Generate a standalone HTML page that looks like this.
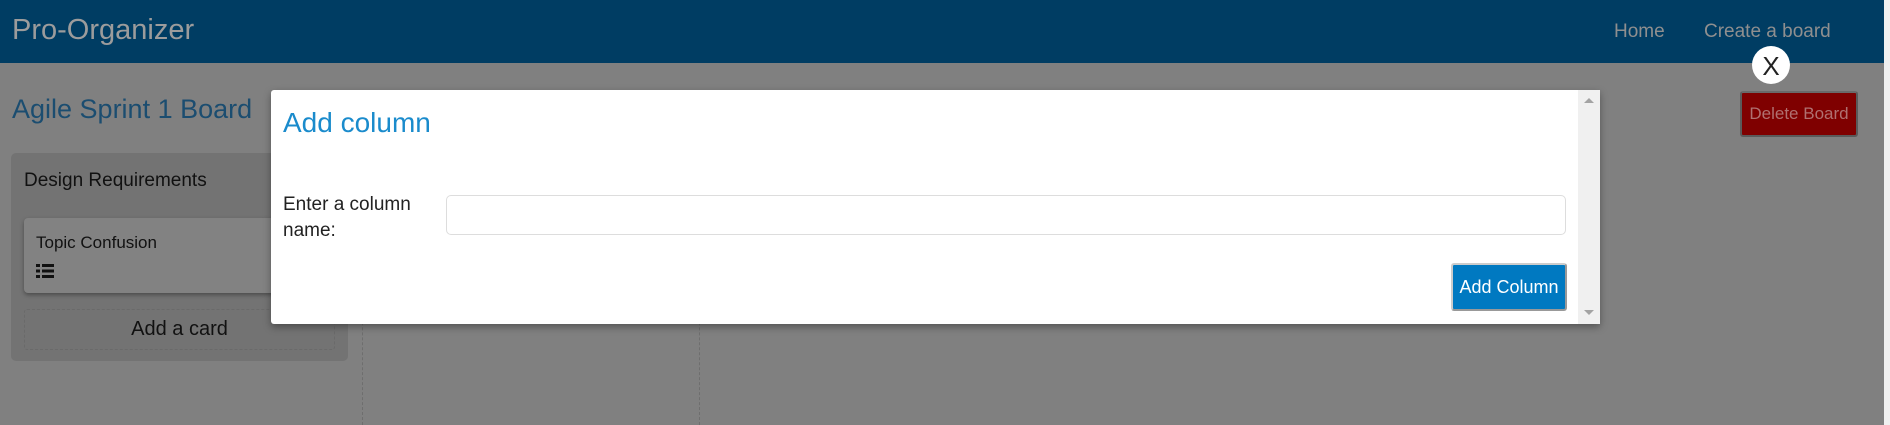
<!DOCTYPE html>
<html><head><meta charset="utf-8"><style>
*{margin:0;padding:0;box-sizing:border-box}
body{width:1890px;height:425px;overflow:hidden;background:#808080;font-family:"Liberation Sans",sans-serif;position:relative}
.a{position:absolute}
</style></head><body>
<div class="a" style="left:0;top:0;width:1890px;height:63px;background:#003d63"></div>
<div class="a" style="left:12px;top:14px;font-size:29px;color:#9c9c9c">Pro-Organizer</div>
<div class="a" style="left:1614px;top:21px;font-size:19px;color:#8f8f8f">Home</div>
<div class="a" style="left:1704px;top:21px;font-size:19px;color:#8f8f8f">Create a board</div>
<div class="a" style="left:1884px;top:0;width:6px;height:425px;background:#f0f0f0"></div>
<div class="a" style="left:12px;top:94px;font-size:27px;color:#1b4d70">Agile Sprint 1 Board</div>
<div class="a" style="left:362px;top:153px;height:272px;border-left:1px dashed #6e6e6e"></div>
<div class="a" style="left:699px;top:153px;height:272px;border-left:1px dashed #6e6e6e"></div>
<div class="a" style="left:11px;top:153px;width:337px;height:208px;background:#737373;border-radius:5px"></div>
<div class="a" style="left:24px;top:170px;font-size:19px;color:#111">Design Requirements</div>
<div class="a" style="left:24px;top:218px;width:311px;height:75px;background:#828282;border-radius:4px;box-shadow:0 2px 4px rgba(0,0,0,.35)"></div>
<div class="a" style="left:36px;top:233px;font-size:17px;color:#111">Topic Confusion</div>
<svg class="a" style="left:36px;top:264px" width="18" height="14" viewBox="0 0 18 14"><g fill="#111"><rect x="0" y="0" width="4" height="3"/><rect x="6" y="0" width="12" height="3"/><rect x="0" y="5.5" width="4" height="3"/><rect x="6" y="5.5" width="12" height="3"/><rect x="0" y="11" width="4" height="3"/><rect x="6" y="11" width="12" height="3"/></g></svg>
<div class="a" style="left:24px;top:309px;width:311px;height:41px;border:1px dashed #6a6a6a;border-radius:3px;font-size:20px;color:#111;text-align:center;line-height:39px">Add a card</div>
<div class="a" style="left:271px;top:90px;width:1329px;height:234px;background:#fff;border-radius:3px 0 0 3px;box-shadow:0 3px 8px rgba(0,0,0,.35)"></div>
<div class="a" style="left:1578px;top:90px;width:22px;height:234px;background:#f0f0f0"></div>
<div class="a" style="left:1584px;top:98px;width:0;height:0;border-left:5px solid transparent;border-right:5px solid transparent;border-bottom:5px solid #a3a3a3"></div>
<div class="a" style="left:1584px;top:310px;width:0;height:0;border-left:5px solid transparent;border-right:5px solid transparent;border-top:5px solid #a3a3a3"></div>
<div class="a" style="left:283px;top:107px;font-size:28px;color:#1a8bcc">Add column</div>
<div class="a" style="left:283px;top:192px;font-size:19px;color:#222;line-height:26px">Enter a column<br>name:</div>
<div class="a" style="left:446px;top:195px;width:1120px;height:40px;border:1px solid #ddd;border-radius:5px"></div>
<div class="a" style="left:1451px;top:263px;width:116px;height:48px;background:#0079c1;border:2px solid #ccc;border-right-color:#999;border-bottom-color:#999;border-radius:3px;color:#fff;font-size:18px;text-align:center;line-height:44px">Add Column</div>
<div class="a" style="left:1740px;top:91px;width:118px;height:46px;background:#7f0000;border:2px solid #5a5a5a;border-top-color:#6a6a6a;border-radius:3px;color:#b07070;font-size:17px;text-align:center;line-height:42px">Delete Board</div>
<div class="a" style="left:1752px;top:46px;width:38px;height:38px;background:#fff;border-radius:50%;text-align:center;line-height:40px;font-size:26px;color:#222">X</div>
</body></html>
